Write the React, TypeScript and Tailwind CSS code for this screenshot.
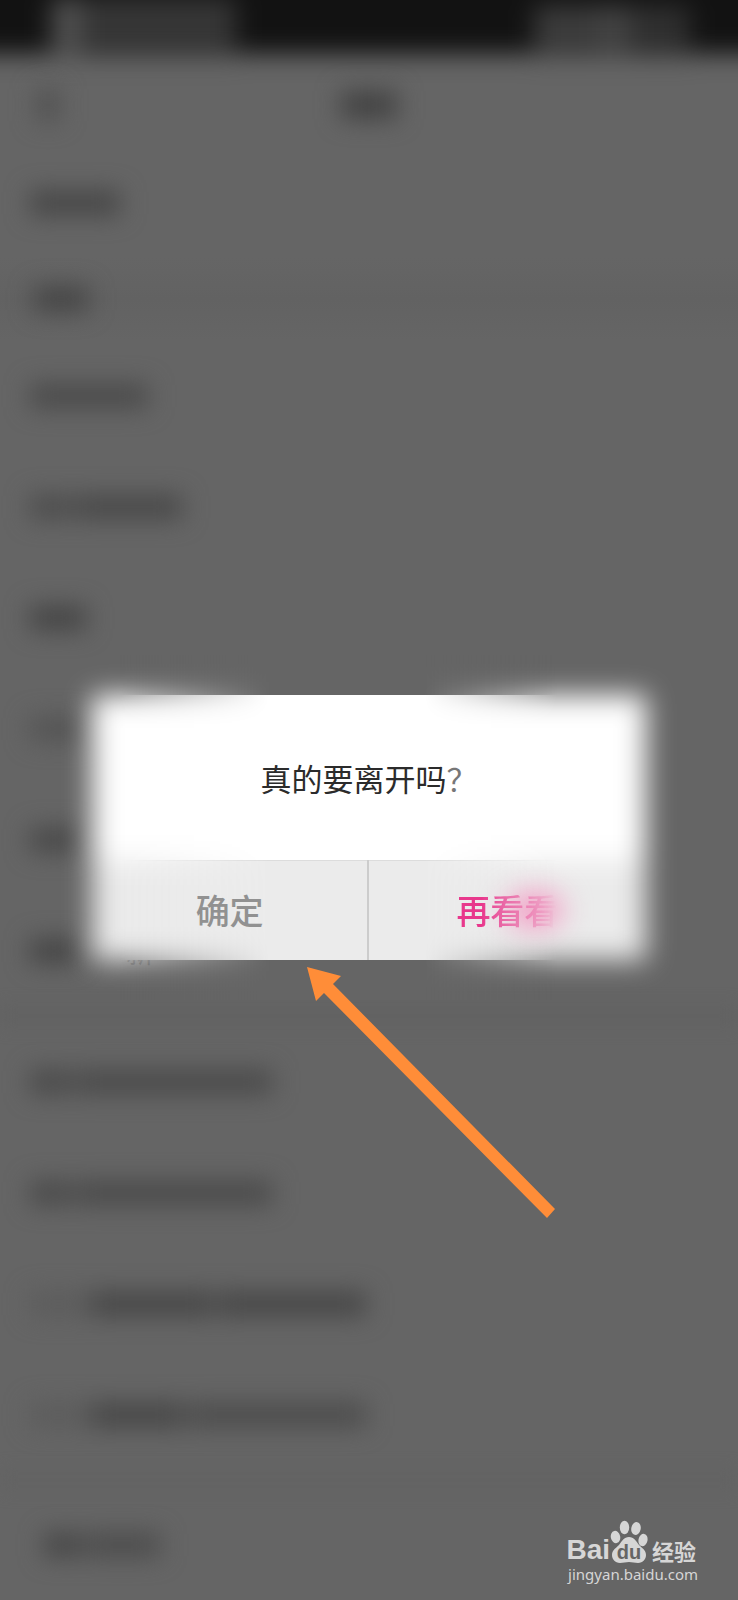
import clsx from 'clsx'

type Row = { id: string; bars: string[]; tail?: string }

const ROWS: Row[] = [
  { id: 'mode', bars: ['w-[118px] bg-[#4a4a4a]'] },
  { id: 'youth', bars: ['w-10 bg-[#4c4c4c]', 'w-[108px] bg-[#484848]'] },
  { id: 'help', bars: ['w-14 bg-[#444444]'] },
  { id: 'about', bars: ['w-14 bg-[#545454]'] },
  { id: 'rate', bars: ['w-12 bg-[#484848]'] },
  { id: 'update', bars: ['w-12 bg-[#444444]'], tail: '新' },
]

const PRIVACY_ROWS: Row[] = [
  { id: 'sdk', bars: ['w-10 bg-[#4a4a4a]', 'w-[198px] bg-[#4a4a4a]'] },
  { id: 'permission', bars: ['w-10 bg-[#4a4a4a]', 'w-[198px] bg-[#4a4a4a]'] },
  { id: 'collect', bars: ['w-14 bg-[#5c5c5c]', 'w-[124px] bg-[#464646]', 'w-[148px] bg-[#464646]'] },
  { id: 'share', bars: ['w-14 bg-[#5c5c5c]', 'w-[94px] bg-[#464646]', 'w-[178px] bg-[#4c4c4c]'] },
]

function Bars({ bars }: { bars: string[] }) {
  return (
    <div className="flex gap-1 blur-[12px]" aria-hidden="true">
      {bars.map((bar, i) => (
        <span key={i} className={clsx('h-6', bar)} />
      ))}
    </div>
  )
}

function SettingsRow({ row }: { row: Row }) {
  return (
    <li className="flex h-[111px] items-center px-[30px]">
      <Bars bars={row.bars} />
      {row.tail && (
        <span className="pl-12 text-[28px] leading-10 text-[#404040] [clip-path:inset(74%_0_0_0)]">
          {row.tail}
        </span>
      )}
    </li>
  )
}

function SettingsScreen() {
  return (
    <div className="overflow-hidden">
      <div className="-mx-8 -mt-9 flex h-[90px] items-end justify-between bg-[#121212] pr-20 pl-[84px] blur-[12px]">
        <div className="flex h-14 items-stretch blur-[4px]">
          <span className="w-7 bg-[#545454]" />
          <span className="w-[156px] bg-[#363636]" />
        </div>
        <div className="flex h-12 items-stretch blur-[4px]">
          <span className="w-16 bg-[#3c3c3c]" />
          <span className="w-8 bg-[#444444]" />
          <span className="w-[60px] bg-[#303030]" />
        </div>
      </div>
      <header className="grid h-[94px] grid-cols-3 items-center px-9 pt-2">
        <span className="h-8 w-6 bg-[#525252] blur-[12px]" />
        <span className="h-7 w-14 justify-self-center bg-[#424242] blur-[12px]" />
      </header>
      <div className="flex h-[110px] items-center px-[30px]">
        <Bars bars={['w-[90px] bg-[#464646]']} />
      </div>
      <div className="flex h-[82px] items-center bg-linear-to-b from-[#656565] via-[#626262] to-[#656565] px-[34px]">
        <Bars bars={['w-[54px] bg-[#444444]']} />
      </div>
      <ul>
        {ROWS.map((row) => (
          <SettingsRow key={row.id} row={row} />
        ))}
      </ul>
      <hr className="h-5 border-0 bg-[#626262] blur-[8px]" />
      <ul>
        {PRIVACY_ROWS.map((row) => (
          <SettingsRow key={row.id} row={row} />
        ))}
      </ul>
      <hr className="h-5 border-0 bg-[#636363] blur-[8px]" />
      <div className="flex h-[110px] items-center px-11">
        <Bars bars={['w-9 bg-[#464646]', 'w-[76px] bg-[#4c4c4c]']} />
      </div>
    </div>
  )
}

function LeaveDialog() {
  return (
    <div role="dialog" aria-label="真的要离开吗？" className="relative w-3/4">
      {/* soft edge of the panel */}
      <div className="absolute inset-0 flex flex-col blur-[14px]">
        <div className="flex-1 bg-white" />
        <div className="h-[100px] bg-[#ebebeb]" />
      </div>
      {/* crisp middle, faded out towards both sides */}
      <div className="absolute inset-x-0 -inset-y-10 bg-[#656565] py-10 [mask-image:linear-gradient(to_right,transparent_5%,#000_32%,#000_60%,transparent_84%)]">
        <div className="flex h-full flex-col">
          <div className="flex-1 bg-white" />
          <div className="h-[100px] border-t border-[#dcdcdc] bg-[#ebebeb]" />
        </div>
      </div>
      <div className="relative">
        <p className="flex h-[165px] items-center justify-center text-[31px] leading-10 text-[#2b2b2b]">
          <span>
            真的要离开吗<span className="text-[#777777]">？</span>
          </span>
        </p>
        <div className="grid h-[100px] grid-cols-2 text-[34px] leading-10 font-medium">
          <button type="button" className="border-r-2 border-[#cccccc] text-[#919191]">
            确定
          </button>
          <button type="button" className="relative text-[#e8388c]">
            <span className="absolute top-8 left-1/2 h-9 w-14 rounded-full bg-[#f2a0c6] blur-[14px]" />
            <span className="relative [mask-image:linear-gradient(to_right,#000_25%,transparent_98%)]">
              再看看
            </span>
          </button>
        </div>
      </div>
    </div>
  )
}

function Arrow() {
  return (
    <svg
      className="absolute top-[967px] left-[307px]"
      width="249"
      height="252"
      viewBox="0 0 249 252"
      aria-hidden="true"
    >
      <polygon points="0,0 34,9 26,17 248,242 240,251 17,26 9,34" fill="#ff8d38" />
    </svg>
  )
}

function Watermark() {
  return (
    <div className="absolute right-10 bottom-4 flex flex-col items-end text-[#d6d6d6]">
      <div className="flex items-end">
        <span className="font-['Liberation_Sans',sans-serif] text-[28px] leading-7 font-bold">Bai</span>
        <svg width="38" height="44" viewBox="0 0 38 44" fill="currentColor" role="img" aria-label="du">
          <ellipse cx="5.5" cy="17" rx="4.7" ry="6.2" transform="rotate(-12 5.5 17)" />
          <ellipse cx="14.5" cy="7.5" rx="4.7" ry="6.7" />
          <ellipse cx="26" cy="8.5" rx="4.7" ry="6.5" transform="rotate(12 26 8.5)" />
          <ellipse cx="33" cy="20" rx="4.5" ry="6.2" transform="rotate(12 33 20)" />
          <path d="M19 17c5 0 7 4 10 8 3 3 7 5 7 10 0 4-3 8-8 8-3 0-6-1-9-1s-6 1-9 1c-5 0-8-4-8-8 0-5 4-7 7-10 3-4 5-8 10-8z" />
          <text
            x="19"
            y="39"
            textAnchor="middle"
            fill="#656565"
            fontFamily="Liberation Sans, sans-serif"
            fontSize="20"
            fontWeight="700"
          >
            du
          </text>
        </svg>
        <span className="pr-0.5 pl-1 text-[22px] leading-7 font-bold">经验</span>
      </div>
      <span className="font-['Noto_Sans',sans-serif] text-[15px] leading-5">jingyan.baidu.com</span>
    </div>
  )
}

export default function App() {
  return (
    <main className="relative overflow-hidden bg-[#656565] font-['Noto_Sans_CJK_SC',sans-serif]">
      <SettingsScreen />
      <div className="absolute inset-0 flex items-start justify-center pt-[695px]">
        <LeaveDialog />
      </div>
      <Arrow />
      <Watermark />
    </main>
  )
}
